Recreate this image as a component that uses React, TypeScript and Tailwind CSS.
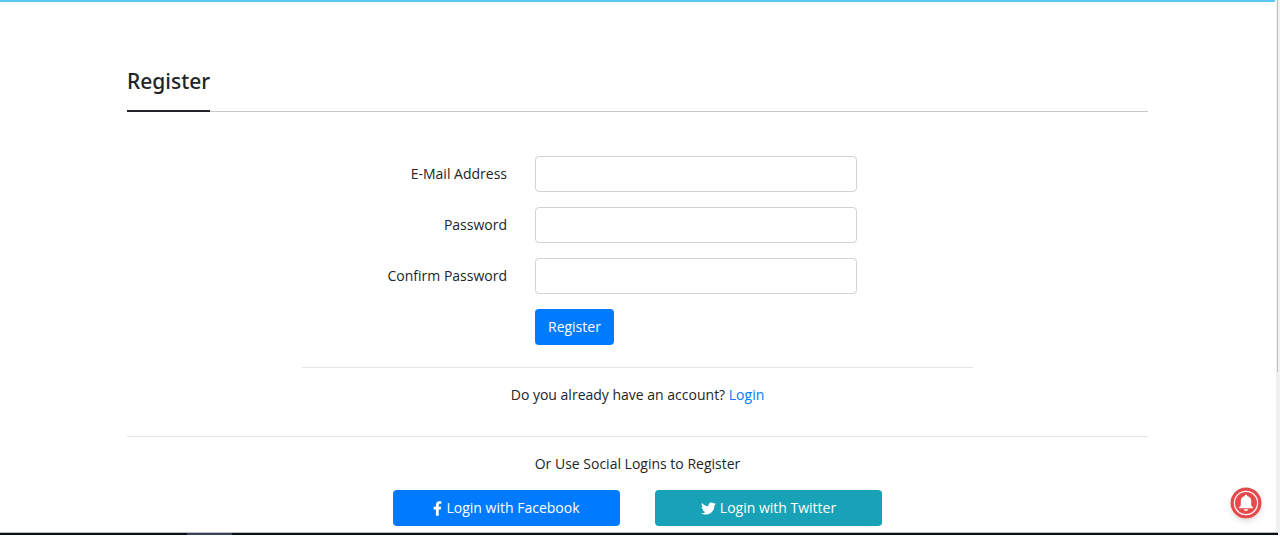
import React, { useState } from 'react';
import { FaFacebookF, FaTwitter } from 'react-icons/fa';

interface FormRowProps {
  id: string;
  label: string;
  type: string;
  value: string;
  onChange: (e: React.ChangeEvent<HTMLInputElement>) => void;
}

const FormRow: React.FC<FormRowProps> = ({ id, label, type, value, onChange }) => (
  <div className="flex -mx-3.5 mb-[15px]">
    <label htmlFor={id} className="w-1/3 px-3.5 text-right leading-9">
      {label}
    </label>
    <div className="w-1/2 px-3.5">
      <input
        id={id}
        name={id}
        type={type}
        value={value}
        onChange={onChange}
        required
        className="block w-full h-9 px-3 border border-[#ced4da] rounded bg-white"
      />
    </div>
  </div>
);

const BellIcon: React.FC = () => (
  <svg viewBox="0 0 32 32" className="size-8" aria-hidden="true">
    <circle cx="16" cy="16" r="15.5" fill="#e54b4d" />
    <circle cx="16" cy="16" r="11.6" fill="none" stroke="#fff" strokeWidth="1.2" />
    <path
      d="M16 7.8c-.8 0-1.2.5-1.2 1.1-2.5.5-4 2.5-4 5.1v3.7c0 1-.6 1.5-1.600 2.300v1.200h13.600v-1.200c-1-.8-1.600-1.300-1.600-2.300v-3.700c0-2.600-1.500-4.600-4-5.100 0-.6-.4-1.100-1.200-1.100z"
      fill="#fff"
    />
    <path d="M13.8 22.3h4.4c-.2 1.100-1 1.600-2.200 1.600s-2-.5-2.200-1.600z" fill="#fff" />
  </svg>
);

const App: React.FC = () => {
  const [formData, setFormData] = useState({ email: '', password: '', confirm: '' });

  const handleChange = (e: React.ChangeEvent<HTMLInputElement>) => {
    const { name, value } = e.target;
    setFormData((prevFormData) => ({ ...prevFormData, [name]: value }));
  };

  const handleSubmit = (e: React.FormEvent) => {
    e.preventDefault();
  };

  return (
    <div className="min-h-screen flex flex-col bg-white text-[#212529] text-sm leading-5 font-['Open_Sans','Noto_Sans',sans-serif]">
      <div className="flex flex-1">
        <div className="flex-1 min-w-0 border-t-2 border-[#5bc8f2]">
          <main className="px-[127px] pt-[62px]">
            <div className="flex border-b border-[#c8c8c8]">
              <h1 className="-mb-px pb-3 border-b-2 border-[#212529] text-[21px] leading-[34px] font-medium font-['Noto_Sans',sans-serif]">
                Register
              </h1>
            </div>

            <div className="max-w-[671px] mx-auto pt-11">
              <form onSubmit={handleSubmit}>
                <FormRow id="email" label="E-Mail Address" type="email" value={formData.email} onChange={handleChange} />
                <FormRow id="password" label="Password" type="password" value={formData.password} onChange={handleChange} />
                <FormRow id="confirm" label="Confirm Password" type="password" value={formData.confirm} onChange={handleChange} />
                <div className="flex -mx-3.5">
                  <div className="w-1/2 ml-[33.3333%] px-3.5">
                    <button type="submit" className="h-9 px-[13px] rounded bg-[#007bff] text-white cursor-pointer">
                      Register
                    </button>
                  </div>
                </div>
              </form>
              <hr className="mt-[22px] border-[#e5e5e5]" />
              <p className="pt-[17px] text-center">
                Do you already have an account?{' '}
                <a href="#login" className="text-[#007bff]">
                  Login
                </a>
              </p>
            </div>

            <hr className="mt-[31px] border-[#e5e5e5]" />
            <p className="pt-[17px] text-center">Or Use Social Logins to Register</p>
            <div className="flex justify-center gap-[35px] pt-4 pb-1.5">
              <button type="button" className="flex items-center justify-center gap-1 w-[227px] h-9 rounded bg-[#007bff] text-white cursor-pointer">
                <FaFacebookF className="w-[9px] h-[15px]" />
                Login with Facebook
              </button>
              <button type="button" className="flex items-center justify-center gap-1 w-[227px] h-9 rounded bg-[#17a2b8] text-white cursor-pointer">
                <FaTwitter className="size-[15px]" />
                Login with Twitter
              </button>
            </div>
          </main>
        </div>

        {/* scroll track */}
        <div className="w-[5px] pl-px bg-white">
          <div className="h-full pl-px pr-0.5 bg-[#f1f1f1]">
            <div className="h-[70%] bg-[#c1c1c1]" />
          </div>
        </div>
      </div>

      {/* bottom edge */}
      <div className="flex h-[3px] mb-1 mr-0.5 border-t border-[#b9bcc2] bg-[#0b0f1a]">
        <div className="w-[45px] ml-[187px] bg-[#3b4256]" />
      </div>

      <button type="button" aria-label="Notifications" className="fixed right-[18px] bottom-5 rounded-full shadow-md cursor-pointer">
        <BellIcon />
      </button>
    </div>
  );
};

export default App;
